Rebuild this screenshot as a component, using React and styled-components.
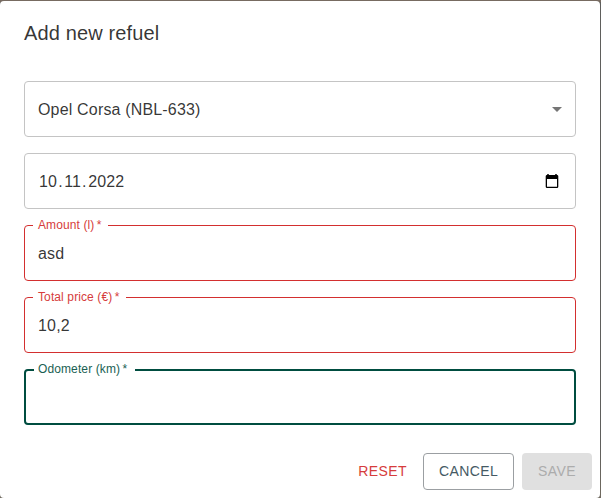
import React from 'react';
import styled, { createGlobalStyle } from 'styled-components';

const GlobalStyle = createGlobalStyle`
  *, *::before, *::after { box-sizing: border-box; }
  body {
    margin: 0;
    overflow: hidden;
    background: #5f5c57;
    font-family: "Liberation Sans", Arial, sans-serif;
  }
`;

const Backdrop = styled.div`
  height: 498px;
  padding: 1px 1px 0 0;
  background: linear-gradient(#776b61 0 2px, #5f5f5c 2px 440px, #706a60);
`;

const Dialog = styled.main`
  height: 497px;
  display: flex;
  flex-direction: column;
  background: #fff;
  border-radius: 4px;
`;

const Title = styled.h2`
  margin: 0;
  height: 80px;
  padding: 16px 24px;
  font-size: 20px;
  line-height: 32px;
  font-weight: 400;
  letter-spacing: 0.13px;
  color: rgba(0, 0, 0, 0.8);
`;

const Form = styled.div`
  display: flex;
  flex-direction: column;
  gap: 16px;
  padding: 0 24px;
`;

const tones = {
  neutral: { border: '#c4c4c4', label: '#666' },
  error: { border: '#d32f2f', label: '#d63c3c' },
  focus: { border: '#004d40', label: '#1a5f53' },
};

const Field = styled.div`
  position: relative;
  display: flex;
  align-items: center;
  justify-content: space-between;
  height: 56px;
  padding: 0 ${p => (p.$tone === 'focus' ? 12 : 13)}px;
  border: ${p => (p.$tone === 'focus' ? 2 : 1)}px solid ${p => tones[p.$tone].border};
  border-radius: 4px;
`;

const Label = styled.span`
  position: absolute;
  top: ${p => (p.$tone === 'focus' ? -10 : -9)}px;
  left: 8px;
  width: ${p => p.$width}px;
  padding-left: ${p => (p.$tone === 'focus' ? 4 : 5)}px;
  background: #fff;
  color: ${p => tones[p.$tone].label};
  font-size: 12px;
  line-height: 17px;
  letter-spacing: 0.11px;
  white-space: nowrap;
`;

const Asterisk = styled.span`
  margin-left: 2.4px;
`;

const Value = styled.span`
  font-size: 16px;
  line-height: 23px;
  letter-spacing: 0.17px;
  color: rgba(0, 0, 0, 0.8);
`;

const DateValue = styled(Value)`
  display: flex;
  padding-left: 1px;
`;

const DatePart = styled.span`
  padding: 0 1px 0 0;
`;

const DateDot = styled.span`
  padding-right: 1.4px;
`;

const DropdownArrow = styled.svg`
  width: 24px;
  height: 24px;
  margin-right: -7px;
  fill: #757575;
`;

const CalendarIcon = styled.svg`
  width: 14px;
  height: 15px;
  margin-right: 3px;
`;

const Actions = styled.div`
  display: flex;
  justify-content: flex-end;
  gap: 8px;
  margin-top: auto;
  padding: 8px;
`;

const variants = {
  text: 'width: 65px; color: #d63c3c; background: transparent;',
  outlined: 'width: 91px; color: #455a64; background: #fff; border: 1px solid #9b9fa2;',
  disabled: 'width: 70px; color: #acacac; background: #e0e0e0;',
};

const Button = styled.button`
  height: 37px;
  padding: 0 0 2px;
  border: 0;
  border-radius: 4px;
  font: 400 14px/24px "Liberation Sans", Arial, sans-serif;
  letter-spacing: 0.4px;
  text-transform: uppercase;
  ${p => variants[p.$variant]}
`;

function OutlinedInput({ tone, label, width, children }) {
  return (
    <Field $tone={tone}>
      <Label $tone={tone} $width={width}>{label}<Asterisk>*</Asterisk></Label>
      <Value>{children}</Value>
    </Field>
  );
}

export default function App() {
  return (
    <>
      <GlobalStyle />
      <Backdrop>
        <Dialog>
          <Title>Add new refuel</Title>
          <Form>
            <Field $tone="neutral">
              <Value>Opel Corsa (NBL-633)</Value>
              <DropdownArrow viewBox="0 0 24 24"><path d="M7 10l5 5 5-5z" /></DropdownArrow>
            </Field>
            <Field $tone="neutral">
              <DateValue>
                <DatePart>10</DatePart><DateDot>.</DateDot>
                <DatePart>11</DatePart><DateDot>.</DateDot>
                <DatePart>2022</DatePart>
              </DateValue>
              <CalendarIcon viewBox="0 0 14 15">
                <path d="M3 0v3M11 0v3" stroke="#000" strokeWidth="1.5" />
                <path fillRule="evenodd" d="M2 1h10a1.3 1.3 0 0 1 1.3 1.3v10.4a1.3 1.3 0 0 1-1.3 1.3H2a1.3 1.3 0 0 1-1.3-1.3V2.3A1.3 1.3 0 0 1 2 1zM2 5v7.7h10V5z" />
              </CalendarIcon>
            </Field>
            <OutlinedInput tone="error" label="Amount (l)" width={75}>asd</OutlinedInput>
            <OutlinedInput tone="error" label="Total price (€)" width={93}>10,2</OutlinedInput>
            <OutlinedInput tone="focus" label="Odometer (km)" width={101} />
          </Form>
          <Actions>
            <Button $variant="text">Reset</Button>
            <Button $variant="outlined">Cancel</Button>
            <Button $variant="disabled" disabled>Save</Button>
          </Actions>
        </Dialog>
      </Backdrop>
    </>
  );
}
